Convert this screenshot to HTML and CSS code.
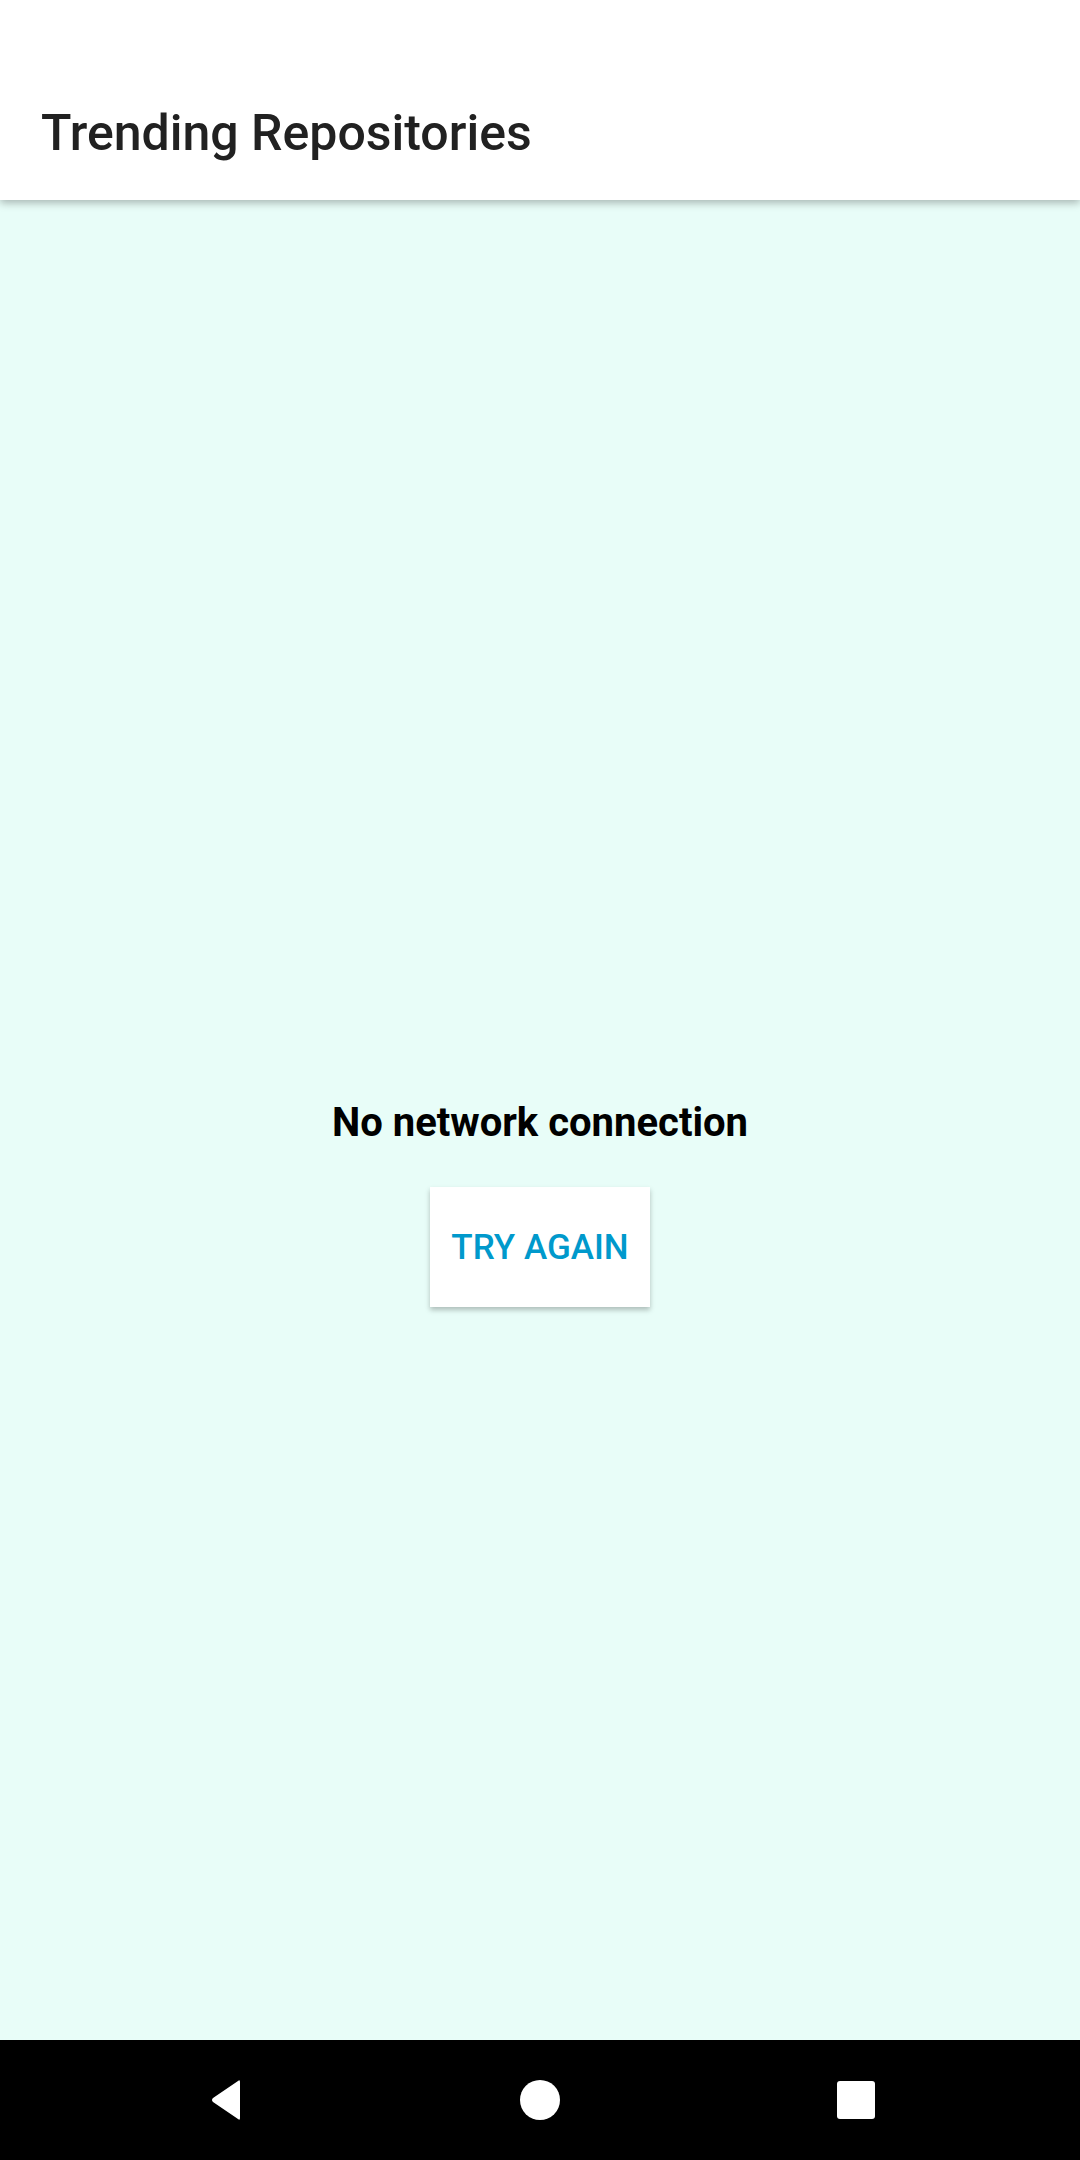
FILE: index.html
```html
<!DOCTYPE html>
<html>
<head>
<meta charset="utf-8">
<link rel="stylesheet" href="styles.css">
</head>
<body>
<div class="screen">
  <header class="appbar">
    <h1 class="title">Trending Repositories</h1>
  </header>
  <main class="content">
    <p class="message">No network connection</p>
    <button class="retry">TRY AGAIN</button>
  </main>
  <nav class="navbar">
    <div class="slot">
      <svg width="40" height="42" viewBox="0 0 40 42"><path d="M36 3 L36 39 Q36 42 34 40 L9 23 Q7 21 9 19 L34 2 Q36 0 36 3 Z" fill="#fff"/></svg>
    </div>
    <div class="slot">
      <svg width="40" height="40" viewBox="0 0 40 40"><circle cx="20" cy="20" r="20" fill="#fff"/></svg>
    </div>
    <div class="slot">
      <svg width="38" height="38" viewBox="0 0 38 38"><rect x="0" y="0" width="38" height="38" rx="3" fill="#fff"/></svg>
    </div>
  </nav>
</div>
</body>
</html>
```

FILE: styles.css
```css
html, body {
  margin: 0;
  padding: 0;
}
body {
  font-family: Roboto, "Liberation Sans", sans-serif;
  background: #E8FDF8;
}
.screen {
  width: 1080px;
  height: 2160px;
  display: flex;
  flex-direction: column;
  overflow: hidden;
}
.appbar {
  height: 200px;
  box-sizing: border-box;
  background: #ffffff;
  padding: 104px 0 0 41px;
  box-shadow: 0 3px 8px rgba(0, 0, 0, 0.28);
  position: relative;
  z-index: 1;
  flex-shrink: 0;
}
.title {
  margin: 0;
  font-size: 50px;
  font-weight: 500;
  line-height: normal;
  color: #212121;
}
.content {
  flex: 1;
  display: flex;
  flex-direction: column;
  align-items: center;
  padding-top: 899px;
  box-sizing: border-box;
}
.message {
  margin: 0;
  font-size: 40px;
  font-weight: 700;
  line-height: normal;
  color: #000000;
}
.retry {
  margin-top: 41px;
  width: 220px;
  height: 120px;
  border: none;
  background: #ffffff;
  font-family: Roboto, "Liberation Sans", sans-serif;
  font-size: 35px;
  font-weight: 500;
  color: #0099CC;
  padding: 0;
  box-shadow: 0 3px 5px rgba(0, 0, 0, 0.25);
}
.navbar {
  height: 120px;
  flex-shrink: 0;
  background: #000000;
  display: flex;
  justify-content: center;
  align-items: center;
}
.slot {
  width: 316px;
  display: flex;
  justify-content: center;
  align-items: center;
}
.slot svg {
  display: block;
}
```
